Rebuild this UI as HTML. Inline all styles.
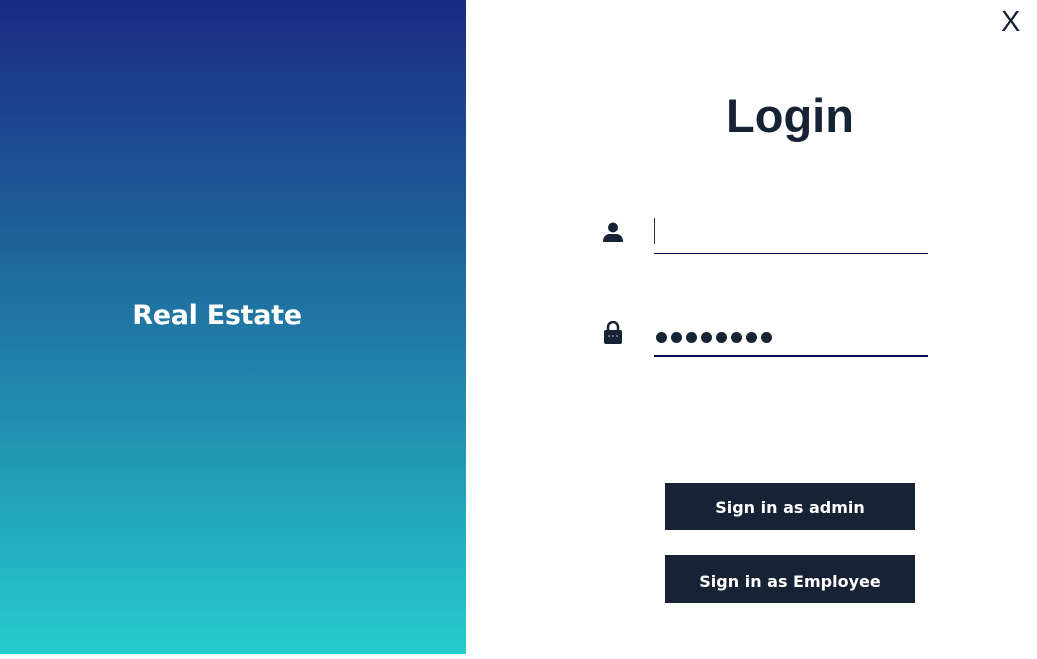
<!DOCTYPE html>
<html><head><style>
body{margin:0;width:1037px;height:659px;background:#fff;position:relative;overflow:hidden;font-family:"DejaVu Sans","Liberation Sans",sans-serif}
.left{position:absolute;left:0;top:0;width:466px;height:654px;background:linear-gradient(#1b2a84,#1e5f98 35%,#2290b0 65%,#26cccc)}
.re{position:absolute;left:0;width:434px;top:300px;text-align:center;color:#fff;font-weight:bold;font-size:27px;letter-spacing:-0.3px}
.x{position:absolute;left:1001px;top:6px;font-size:29px;color:#172235;font-family:"Liberation Sans",sans-serif}
.login{position:absolute;left:690px;width:200px;top:88px;text-align:center;font-weight:bold;font-size:47px;color:#172235;font-family:"Liberation Sans",sans-serif}
.line1{position:absolute;left:654px;top:253px;width:274px;height:1px;background:#0b0b55}
.line2{position:absolute;left:654px;top:355px;width:274px;height:2px;background:#0b0b55}
.caret{position:absolute;left:654px;top:218px;width:1px;height:26px;background:#333}
.dots{position:absolute;left:656px;top:328px}
.dots span{display:inline-block;width:11px;height:11px;border-radius:50%;background:#172235;margin-right:4px}
.btn{position:absolute;left:665px;width:250px;height:47px;background:#172235;color:#fff;font-weight:bold;font-size:16px;text-align:center;line-height:50px}
</style></head><body>
<div class="left"></div><div class="re">Real Estate</div>
<div class="x">X</div>
<div class="login">Login</div>
<svg style="position:absolute;left:602px;top:221px" width="22" height="22" viewBox="0 0 22 22"><circle cx="11" cy="6.5" r="5" fill="#172235"/><path d="M1 21 Q1 14 7 13 L15 13 Q21 14 21 21Z" fill="#172235"/></svg>
<div class="caret"></div><div class="line1"></div>
<svg style="position:absolute;left:603px;top:321px" width="20" height="24" viewBox="0 0 20 24"><path d="M5 10 V6 a5 5 0 0 1 10 0 V10" fill="none" stroke="#172235" stroke-width="2.5"/><rect x="1" y="9" width="18" height="14" rx="2" fill="#172235"/><circle cx="6" cy="15" r="0.8" fill="#ccc"/><circle cx="10" cy="15" r="0.8" fill="#ccc"/><circle cx="14" cy="15" r="0.8" fill="#ccc"/></svg>
<div class="dots"><span></span><span></span><span></span><span></span><span></span><span></span><span></span><span></span></div>
<div class="line2"></div>
<div class="btn" style="top:483px">Sign in as admin</div>
<div class="btn" style="top:555px;height:48px;line-height:53px">Sign in as Employee</div>
</body></html>
